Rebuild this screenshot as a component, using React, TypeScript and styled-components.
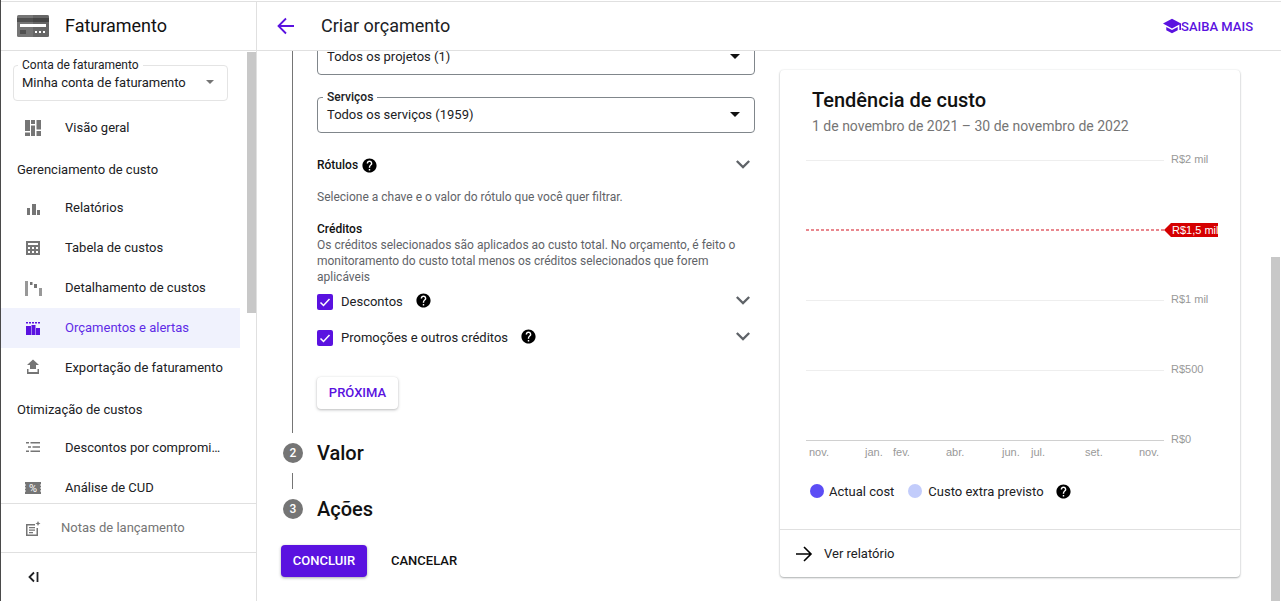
import React from "react";
import styled, { createGlobalStyle } from "styled-components";

const PURPLE = "#5a12e0";
const HELP_PATH =
  "M12 2C6.48 2 2 6.48 2 12s4.48 10 10 10 10-4.48 10-10S17.52 2 12 2zm1 17h-2v-2h2v2zm2.07-7.75l-.9.92C13.45 12.9 13 13.5 13 15h-2v-.5c0-1.1.45-2.1 1.17-2.83l1.24-1.26c.37-.36.59-.86.59-1.41 0-1.1-.9-2-2-2s-2 .9-2 2H8c0-2.21 1.79-4 4-4s4 1.79 4 4c0 .88-.36 1.68-.93 2.25z";

const GlobalStyle = createGlobalStyle`
  html, body {
    margin: 0;
    overflow: hidden;
    background: #fff;
  }

  * {
    box-sizing: border-box;
  }
`;

const Help: React.FC = () => (
  <HelpSvg viewBox="0 0 24 24">
    <path d={HELP_PATH} />
  </HelpSvg>
);

const Expand: React.FC = () => (
  <ExpandSvg viewBox="6 8.6 12 7.4">
    <path d="M16.59 8.59L12 13.17 7.41 8.59 6 10l6 6 6-6z" />
  </ExpandSvg>
);

const Check: React.FC = () => (
  <CheckBox>
    <svg width="16" height="16" viewBox="0 0 16 16">
      <path d="M3.5 8.5l3 3 6-6.5" fill="none" stroke="#fff" strokeWidth="1.5" />
    </svg>
  </CheckBox>
);

const navIcons: Record<string, React.ReactNode> = {
  overview: (
    <path d="M4 5h5v11H4zM4 17.5h5V21H4zM10 5h4v4h-4zM10 10.5h4V21h-4zM15.5 5H20v9.5h-4.5zM15.5 16H20v5h-4.5z" />
  ),
  reports: <path d="M6 13h3v7H6zM11 9h4v11h-4zM16 15h3v5h-3z" />,
  table: (
    <path
      fillRule="evenodd"
      d="M5 6h14v14H5zM7 8v2h10V8zM7 12v2h2v-2zM11 12v2h2v-2zM15 12v2h2v-2zM7 16v2h2v-2zM11 16v2h2v-2zM15 16v2h2v-2z"
    />
  ),
  breakdown: (
    <>
      <path opacity="0.75" d="M4 6h3v15H4zM18 13h3v8h-3z" />
      <path d="M9 7h2.5v3H9zM13 9h3v4h-3z" />
    </>
  ),
  budgets: (
    <path d="M5 7h2v1.5H5zM8 7h2v1.5H8zM11 7h2v1.5h-2zM14 7h2v1.5h-2zM17 7h2v1.5h-2zM5 11h5v9H5zM10.5 10h4v10h-4zM15 13h4v7h-4z" />
  ),
  exportBilling: <path d="M9 14h6v-4h3l-6-5.5L6 10h3zM6 14v5h12v-5h-1.5v3h-9v-3z" />,
  commitments: (
    <path d="M5 7h3v1.5H5zM9.5 7H19v1.5H9.5zM7 11.2h3v1.5H7zM11.5 11.2H19v1.5h-7.5zM5 15.5h3V17H5zM9.5 15.5H19V17H9.5z" />
  ),
  cud: (
    <>
      <path d="M4 7h16v12H4z" />
      <path fill="#fff" d="M4 9.5h1v1H4zM4 12.5h1v1H4zM4 15.5h1v1H4zM19 9.5h1v1h-1zM19 12.5h1v1h-1zM19 15.5h1v1h-1z" />
      <text x="12" y="17.2" fill="#fff" fontSize="11" fontFamily="Roboto, sans-serif" textAnchor="middle">
        %
      </text>
    </>
  ),
  notes: (
    <path
      fillRule="evenodd"
      d="M5 9h9v1.5H6.5v9h9V13H17v8H5zM8 12h6v1.2H8zM8 14.5h6v1.2H8zM8 17h4v1.2H8zM17 6l.8 1.7 1.7.8-1.7.8L17 11l-.8-1.7-1.7-.8 1.7-.8z"
    />
  ),
};

type NavEntry = { icon: string; label: string; active?: boolean } | { heading: string };

const navEntries: NavEntry[] = [
  { icon: "overview", label: "Visão geral" },
  { heading: "Gerenciamento de custo" },
  { icon: "reports", label: "Relatórios" },
  { icon: "table", label: "Tabela de custos" },
  { icon: "breakdown", label: "Detalhamento de custos" },
  { icon: "budgets", label: "Orçamentos e alertas", active: true },
  { icon: "exportBilling", label: "Exportação de faturamento" },
  { heading: "Otimização de custos" },
  { icon: "commitments", label: "Descontos por compromi…" },
  { icon: "cud", label: "Análise de CUD" },
];

const gridLines = [
  { y: 10, label: "R$2 mil" },
  { y: 150, label: "R$1 mil" },
  { y: 220, label: "R$500" },
  { y: 290, label: "R$0", axis: true },
];

const months = [
  { x: 3, label: "nov." },
  { x: 59, label: "jan." },
  { x: 87, label: "fev." },
  { x: 140, label: "abr." },
  { x: 196, label: "jun." },
  { x: 225, label: "jul." },
  { x: 279, label: "set." },
  { x: 333, label: "nov." },
];

const TrendChart: React.FC = () => (
  <ChartSvg viewBox="0 0 412 314">
    {gridLines.map((line) => (
      <g key={line.label}>
        <line x1="0" x2="358" y1={line.y + 0.5} y2={line.y + 0.5} stroke={line.axis ? "#d0d0d0" : "#eeeeee"} />
        <text x="365" y={line.y + 3} fill="#999" fontSize="11" fontFamily="Liberation Sans, sans-serif">
          {line.label}
        </text>
      </g>
    ))}
    <line x1="0" x2="358" y1="80" y2="80" stroke="#e2606a" strokeWidth="1.5" strokeDasharray="3 2" />
    <polygon points="358,80 365,73 412,73 412,87 365,87" fill="#d50000" />
    <text x="366" y="84" fill="#fff" fontSize="11" fontFamily="Liberation Sans, sans-serif">
      R$1,5 mil
    </text>
    {months.map((month) => (
      <text key={month.x} x={month.x} y="306" fill="#999" fontSize="11" fontFamily="Liberation Sans, sans-serif">
        {month.label}
      </text>
    ))}
  </ChartSvg>
);

const App: React.FC = () => (
  <Page>
    <GlobalStyle />
    <Frame>
      <Sidebar>
        <SideHeader>
          <svg width="32" height="22" viewBox="0 0 32 22">
            <rect width="32" height="22" rx="1.5" fill="#757575" />
            <rect y="3" width="32" height="4" fill="#505050" />
            <rect x="16" width="16" height="22" fill="#000" opacity="0.12" />
            <rect x="3" y="9" width="26" height="3" fill="#fff" />
            <rect x="3" y="15" width="6" height="4" fill="#505050" />
            <rect x="18" y="16" width="2" height="2" fill="#fff" />
            <rect x="22" y="16" width="2" height="2" fill="#fff" />
            <rect x="26" y="16" width="2" height="2" fill="#fff" />
          </svg>
          <SideTitle>Faturamento</SideTitle>
        </SideHeader>
        <Nav>
          <AccountSelect>
            <AccountLabel>Conta de faturamento</AccountLabel>
            Minha conta de faturamento
            <SmallCaret />
          </AccountSelect>
          <NavList>
            {navEntries.map((entry) =>
              "heading" in entry ? (
                <NavHeading key={entry.heading}>{entry.heading}</NavHeading>
              ) : (
                <NavItem key={entry.label} $active={entry.active}>
                  <NavIcon viewBox="0 0 24 24">{navIcons[entry.icon]}</NavIcon>
                  {entry.label}
                </NavItem>
              )
            )}
          </NavList>
          <NavThumb />
        </Nav>
        <NotesRow>
          <NavIcon viewBox="0 0 24 24">{navIcons.notes}</NavIcon>
          Notas de lançamento
        </NotesRow>
        <CollapseRow>
          <svg width="12" height="12" viewBox="0 0 12 12">
            <path d="M7 1.5L2.5 6 7 10.5M10.5 1v10" fill="none" stroke="#202124" strokeWidth="1.8" />
          </svg>
        </CollapseRow>
      </Sidebar>
      <Main>
        <TopBar>
          <svg width="18" height="18" viewBox="0 0 18 18">
            <path d="M17 9H2M9 1.5L1.5 9 9 16.5" fill="none" stroke={PURPLE} strokeWidth="1.8" />
          </svg>
          <PageTitle>Criar orçamento</PageTitle>
          <LearnMore>
            <svg width="18" height="18" viewBox="1 1 22 22">
              <path
                fill={PURPLE}
                d="M5 13.18v4L12 21l7-3.82v-4L12 17l-7-3.82zM12 3L1 9l11 6 9-4.91V17h2V9L12 3z"
              />
            </svg>
            SAIBA MAIS
          </LearnMore>
        </TopBar>
        <Body>
          <FormColumn>
            <StepContent>
              <Field>
                Todos os projetos (1)
                <Caret />
              </Field>
              <Field $spaced>
                <FieldLabel>Serviços</FieldLabel>
                Todos os serviços (1959)
                <Caret />
              </Field>
              <LabelsRow>
                <StrongText>Rótulos</StrongText>
                <Help />
                <Expand />
              </LabelsRow>
              <Hint>Selecione a chave e o valor do rótulo que você quer filtrar.</Hint>
              <CreditsTitle>Créditos</CreditsTitle>
              <Description>
                Os créditos selecionados são aplicados ao custo total. No orçamento, é feito o monitoramento do custo
                total menos os créditos selecionados que forem aplicáveis
              </Description>
              <CreditRow>
                <Check />
                <span>Descontos</span>
                <Help />
                <Expand />
              </CreditRow>
              <CreditRow $spaced>
                <Check />
                <span>Promoções e outros créditos</span>
                <Help />
                <Expand />
              </CreditRow>
              <NextButton>PRÓXIMA</NextButton>
            </StepContent>
            <StepRow>
              <StepNumber>2</StepNumber>
              <StepTitle>Valor</StepTitle>
            </StepRow>
            <StepConnector />
            <StepRow>
              <StepNumber>3</StepNumber>
              <StepTitle>Ações</StepTitle>
            </StepRow>
            <Actions>
              <PrimaryButton>CONCLUIR</PrimaryButton>
              <TextButton>CANCELAR</TextButton>
            </Actions>
          </FormColumn>
          <Card>
            <CardTitle>Tendência de custo</CardTitle>
            <CardSubtitle>1 de novembro de 2021 – 30 de novembro de 2022</CardSubtitle>
            <TrendChart />
            <Legend>
              <LegendDot $color="#5c4df5" />
              <LegendLabel $gap={5} $after={14}>
                Actual cost
              </LegendLabel>
              <LegendDot $color="#c2ccfb" />
              <LegendLabel $gap={6} $after={11}>
                Custo extra previsto
              </LegendLabel>
              <Help />
            </Legend>
            <CardFooter>
              <svg width="18" height="16" viewBox="0 0 18 16">
                <path d="M1 8h15M9 1l7 7-7 7" fill="none" stroke="#000" strokeWidth="1.6" />
              </svg>
              Ver relatório
            </CardFooter>
          </Card>
          <BodyThumb />
        </Body>
      </Main>
    </Frame>
  </Page>
);

const Page = styled("div")`
  width: 1281px;
  height: 601px;
  padding-top: 1px;
  border-left: 1px solid #4a4a4a;
  overflow: hidden;
  font-family: Roboto, "Liberation Sans", sans-serif;
  font-size: 13px;
  color: #202124;
  background: #fff;
`;

const Frame = styled("div")`
  display: flex;
  height: 600px;
  border-top: 1px solid #e0e0e0;
`;

const Sidebar = styled("aside")`
  display: flex;
  flex-direction: column;
  flex: none;
  width: 256px;
  border-right: 1px solid #e0e0e0;
`;

const SideHeader = styled("div")`
  display: flex;
  align-items: center;
  flex: none;
  gap: 16px;
  height: 49px;
  padding-left: 16px;
  border-bottom: 1px solid #e0e0e0;
`;

const SideTitle = styled("div")`
  margin-bottom: 2px;
  font-size: 18px;
  color: #111;
`;

const Nav = styled("nav")`
  position: relative;
  flex: 1;
  min-height: 0;
  padding-top: 14px;
  overflow: hidden;
`;

const NavThumb = styled("div")`
  position: absolute;
  top: 1px;
  right: 0;
  width: 9px;
  height: 261px;
  background: #c8c8c8;
`;

const AccountSelect = styled("div")`
  position: relative;
  display: flex;
  align-items: center;
  width: 215px;
  height: 36px;
  margin-left: 12px;
  padding: 0 13px 2px 8px;
  border: 1px solid #e4e4e4;
  border-radius: 4px;
  color: #202124;
`;

const AccountLabel = styled("span")`
  position: absolute;
  top: -8px;
  left: 4px;
  padding: 0 4px;
  font-size: 12px;
  line-height: 14px;
  background: #fff;
`;

const Caret = styled("span")`
  margin-left: auto;
  width: 0;
  height: 0;
  border-left: 5px solid transparent;
  border-right: 5px solid transparent;
  border-top: 5px solid #111;
`;

const SmallCaret = styled(Caret)`
  border-left-width: 4px;
  border-right-width: 4px;
  border-top: 4px solid #757575;
`;

const NavList = styled("div")`
  display: flex;
  flex-direction: column;
  margin-top: 7px;
`;

const NavItem = styled("div")<{ $active?: boolean }>`
  display: flex;
  align-items: center;
  flex: none;
  gap: 20px;
  width: 239px;
  height: 40px;
  padding: 0 0 2px 20px;
  color: ${({ $active }) => ($active ? "#5f2ce6" : "#202124")};
  background: ${({ $active }) => ($active ? "#f0f2fd" : "transparent")};

  svg {
    color: ${({ $active }) => ($active ? PURPLE : "#757575")};
  }
`;

const NavHeading = styled("div")`
  flex: none;
  height: 40px;
  padding: 14px 0 0 16px;
  line-height: 16px;
  color: #202124;
`;

const NavIcon = styled("svg")`
  flex: none;
  width: 24px;
  height: 24px;
  fill: currentColor;
`;

const NotesRow = styled("div")`
  display: flex;
  align-items: center;
  flex: none;
  gap: 16px;
  height: 49px;
  padding: 0 0 2px 20px;
  border-top: 1px solid #e0e0e0;
  color: #757575;

  svg {
    color: #757575;
  }
`;

const CollapseRow = styled("div")`
  display: flex;
  align-items: center;
  flex: none;
  height: 49px;
  padding-left: 26px;
  border-top: 1px solid #e0e0e0;
`;

const Main = styled("main")`
  display: flex;
  flex-direction: column;
  flex: 1;
  min-width: 0;
`;

const TopBar = styled("header")`
  display: flex;
  align-items: center;
  flex: none;
  height: 49px;
  padding: 0 28px 0 20px;
  border-bottom: 1px solid #e0e0e0;
`;

const PageTitle = styled("h1")`
  margin: 0 0 2px 26px;
  font-size: 18px;
  font-weight: 400;
  color: #202124;
`;

const LearnMore = styled("div")`
  display: flex;
  align-items: center;
  margin-left: auto;
  font-weight: 500;
  color: ${PURPLE};
`;

const Body = styled("div")`
  position: relative;
  display: flex;
  align-items: flex-start;
  flex: 1;
  min-height: 0;
  gap: 25px;
  padding-left: 24px;
  overflow: hidden;
`;

const BodyThumb = styled("div")`
  position: absolute;
  top: 206px;
  right: 1px;
  bottom: 0;
  width: 9px;
  background: #c8c8c8;
`;

const FormColumn = styled("div")`
  flex: none;
  width: 474px;
  margin-top: -12px;
`;

const StepContent = styled("div")`
  margin-left: 11px;
  padding: 0 0 24px 24px;
  border-left: 1px solid #757575;
`;

const Field = styled("div")<{ $spaced?: boolean }>`
  position: relative;
  display: flex;
  align-items: center;
  height: 36px;
  margin-top: ${({ $spaced }) => ($spaced ? "22px" : "0")};
  padding: 0 14px 2px 9px;
  border: 1px solid #80868b;
  border-radius: 4px;
  color: #202124;
`;

const FieldLabel = styled("span")`
  position: absolute;
  top: -8px;
  left: 5px;
  padding: 0 4px;
  font-size: 12px;
  line-height: 14px;
  font-weight: 500;
  background: #fff;
`;

const LabelsRow = styled("div")`
  display: flex;
  align-items: center;
  gap: 3px;
  height: 24px;
  margin-top: 20px;
`;

const StrongText = styled("span")`
  font-size: 12px;
  font-weight: 500;
  color: #111;
`;

const HelpSvg = styled("svg")`
  flex: none;
  width: 17px;
  height: 17px;
  fill: #000;
`;

const ExpandSvg = styled("svg")`
  flex: none;
  width: 14px;
  height: 9px;
  margin: 0 5px 2px auto;
  fill: #5f6368;
`;

const Hint = styled("div")`
  margin-top: 12px;
  font-size: 12px;
  line-height: 16px;
  color: #5f6368;
`;

const CreditsTitle = styled(StrongText)`
  display: block;
  margin-top: 16px;
  line-height: 16px;
`;

const Description = styled("div")`
  font-size: 12px;
  line-height: 16px;
  color: #5f6368;
`;

const CreditRow = styled("div")<{ $spaced?: boolean }>`
  display: flex;
  align-items: center;
  height: 24px;
  margin-top: ${({ $spaced }) => ($spaced ? "12px" : "4px")};

  > span {
    margin-left: 8px;
    margin-right: 12px;
  }

  ${HelpSvg} {
    margin-bottom: 2px;
  }
`;

const CheckBox = styled("div")`
  display: flex;
  flex: none;
  width: 16px;
  height: 16px;
  margin-top: 2px;
  border-radius: 2px;
  background: ${PURPLE};
`;

const NextButton = styled("button")`
  display: block;
  width: 81px;
  height: 32px;
  margin-top: 28px;
  padding: 0 0 2px;
  border: 0;
  border-radius: 4px;
  font: 500 13px Roboto, sans-serif;
  color: ${PURPLE};
  background: #fff;
  box-shadow: 0 1px 3px rgba(60, 64, 67, 0.35), 0 0 1px rgba(60, 64, 67, 0.1);
`;

const StepRow = styled("div")`
  display: flex;
  align-items: center;
  gap: 14px;
  height: 40px;
  padding-left: 2px;
`;

const StepNumber = styled("div")`
  display: flex;
  align-items: center;
  justify-content: center;
  flex: none;
  width: 20px;
  height: 20px;
  border-radius: 50%;
  font-size: 12px;
  font-weight: 500;
  color: #fff;
  background: #757575;
`;

const StepTitle = styled("h2")`
  margin: 0;
  font-size: 20px;
  font-weight: 500;
  color: #111;
`;

const StepConnector = styled("div")`
  width: 1px;
  height: 16px;
  margin-left: 11px;
  background: #757575;
`;

const Actions = styled("div")`
  display: flex;
  align-items: center;
  gap: 24px;
  margin-top: 16px;
`;

const PrimaryButton = styled("button")`
  width: 86px;
  height: 32px;
  padding: 0 0 2px;
  border: 0;
  border-radius: 4px;
  font: 500 13px Roboto, sans-serif;
  color: #fff;
  background: ${PURPLE};
  box-shadow: 0 1px 3px rgba(60, 64, 67, 0.45);
`;

const TextButton = styled("button")`
  padding: 0 0 2px;
  border: 0;
  font: 500 13px Roboto, sans-serif;
  color: #111;
  background: none;
`;

const Card = styled("section")`
  display: flex;
  flex-direction: column;
  flex: none;
  width: 460px;
  height: 507px;
  margin-top: 19px;
  padding-top: 18px;
  border-radius: 4px;
  background: #fff;
  box-shadow: 0 1px 2px rgba(60, 64, 67, 0.4), 0 0 2px rgba(60, 64, 67, 0.12);
`;

const CardTitle = styled("h3")`
  margin: 0 0 0 32px;
  font-size: 20px;
  line-height: 24px;
  font-weight: 500;
  color: #111;
`;

const CardSubtitle = styled("div")`
  margin: 4px 0 0 32px;
  font-size: 14px;
  line-height: 20px;
  color: #757575;
`;

const ChartSvg = styled("svg")`
  display: block;
  flex: none;
  width: 412px;
  height: 314px;
  margin: 14px 0 0 26px;
`;

const Legend = styled("div")`
  display: flex;
  align-items: center;
  height: 20px;
  margin: 17px 0 0 30px;
`;

const LegendDot = styled("span")<{ $color: string }>`
  flex: none;
  width: 14px;
  height: 14px;
  border-radius: 50%;
  background: ${({ $color }) => $color};
`;

const LegendLabel = styled("span")<{ $gap: number; $after: number }>`
  margin: 0 ${({ $after }) => $after}px 0 ${({ $gap }) => $gap}px;
  color: #202124;
`;

const CardFooter = styled("div")`
  display: flex;
  align-items: center;
  gap: 11px;
  height: 48px;
  margin-top: auto;
  padding-left: 15px;
  border-top: 1px solid #e0e0e0;
  color: #202124;
`;

export default App;
